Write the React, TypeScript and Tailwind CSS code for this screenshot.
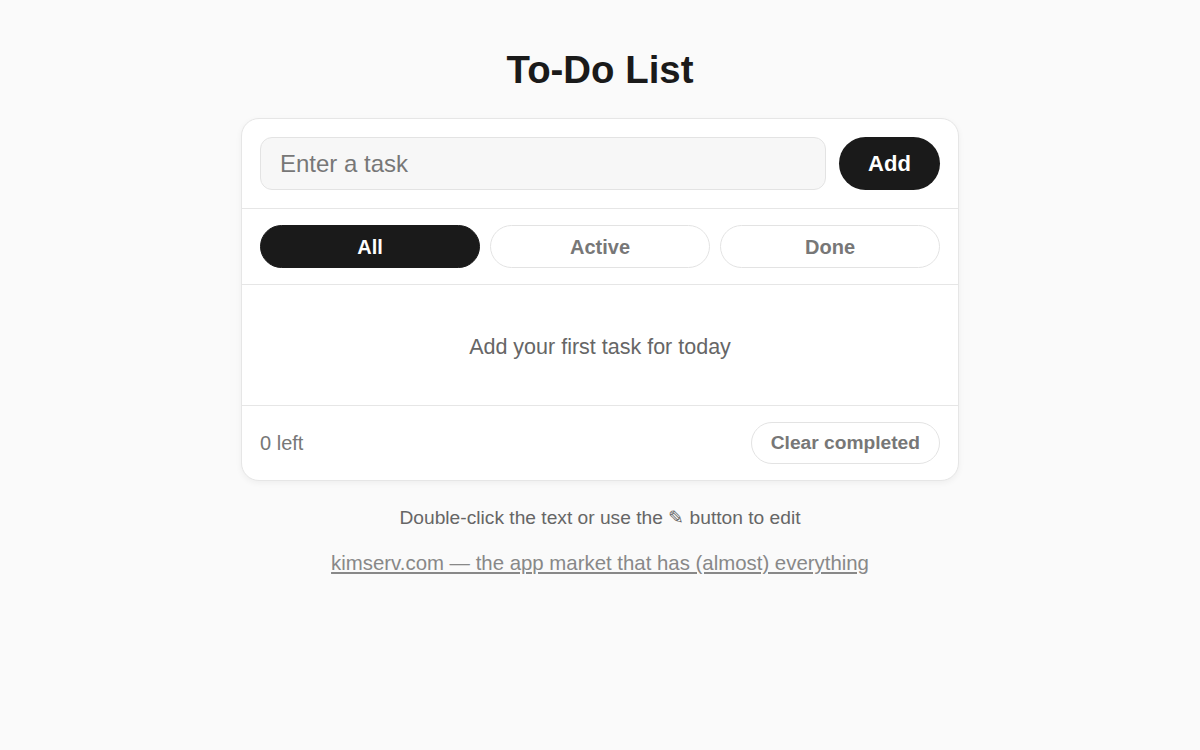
import { useState } from "react";

type Filter = "all" | "active" | "done";

interface Task {
  id: number;
  text: string;
  done: boolean;
}

const filters: { id: Filter; label: string }[] = [
  { id: "all", label: "All" },
  { id: "active", label: "Active" },
  { id: "done", label: "Done" },
];

export default function App() {
  const [tasks, setTasks] = useState<Task[]>([]);
  const [draft, setDraft] = useState("");
  const [filter, setFilter] = useState<Filter>("all");

  const addTask = () => {
    const text = draft.trim();
    if (!text) return;
    setTasks(prev => [...prev, { id: Date.now(), text, done: false }]);
    setDraft("");
  };

  const visible = tasks.filter(t =>
    filter === "all" ? true : filter === "active" ? !t.done : t.done
  );
  const left = tasks.filter(t => !t.done).length;

  return (
    <div className="min-h-screen bg-[#fafafa] flex flex-col items-center font-['Liberation_Sans',Arial,sans-serif] text-[#1a1a1a]">
      <h1 className="mt-[51px] mb-[29px] text-[38.4px] leading-none font-bold">
        To-Do List
      </h1>

      <div className="w-[718px] bg-white border border-[#e6e6e6] rounded-[18px] shadow-[0_2px_6px_rgba(0,0,0,0.05)] overflow-hidden">
        <div className="flex items-center gap-[13px] p-[18px] border-b border-[#e6e6e6]">
          <input
            value={draft}
            onChange={e => setDraft(e.target.value)}
            onKeyDown={e => e.key === "Enter" && addTask()}
            placeholder="Enter a task"
            className="flex-1 h-[53px] px-[19px] rounded-[12px] border border-[#e3e3e3] bg-[#f7f7f7] text-[24px] placeholder:text-[#777] outline-none"
          />
          <button
            onClick={addTask}
            className="w-[101px] h-[53px] rounded-full bg-[#1a1a1a] text-white text-[22px] font-bold"
          >
            Add
          </button>
        </div>

        <div className="flex gap-[10px] px-[18px] py-4 border-b border-[#e6e6e6]">
          {filters.map(f => (
            <button
              key={f.id}
              onClick={() => setFilter(f.id)}
              className={`flex-1 h-[43px] rounded-full text-[20px] font-bold border ${
                filter === f.id
                  ? "bg-[#1a1a1a] border-[#1a1a1a] text-white"
                  : "bg-white border-[#e3e3e3] text-[#777]"
              }`}
            >
              {f.label}
            </button>
          ))}
        </div>

        {visible.length === 0 ? (
          <div className="h-[120px] flex items-center justify-center pt-[3px] text-[21.5px] text-[#666]">
            Add your first task for today
          </div>
        ) : (
          <ul>
            {visible.map(t => (
              <li key={t.id} className="px-[18px] py-3 text-[20px] border-b border-[#eee]">
                {t.text}
              </li>
            ))}
          </ul>
        )}

        <div className="flex items-center justify-between px-[18px] py-4 border-t border-[#e6e6e6]">
          <span className="text-[20px] text-[#777]">{left} left</span>
          <button
            onClick={() => setTasks(prev => prev.filter(t => !t.done))}
            className="h-[42px] px-[19px] rounded-full border border-[#e3e3e3] bg-white text-[19.2px] font-bold text-[#777]"
          >
            Clear completed
          </button>
        </div>
      </div>

      <p className="mt-[23px] text-[19.2px] text-[#666]">
        Double-click the text or use the ✎ button to edit
      </p>
      <a href="#" className="mt-[15px] text-[20.4px] text-[#888] underline underline-offset-[2px]">
        kimserv.com — the app market that has (almost) everything
      </a>
    </div>
  );
}
